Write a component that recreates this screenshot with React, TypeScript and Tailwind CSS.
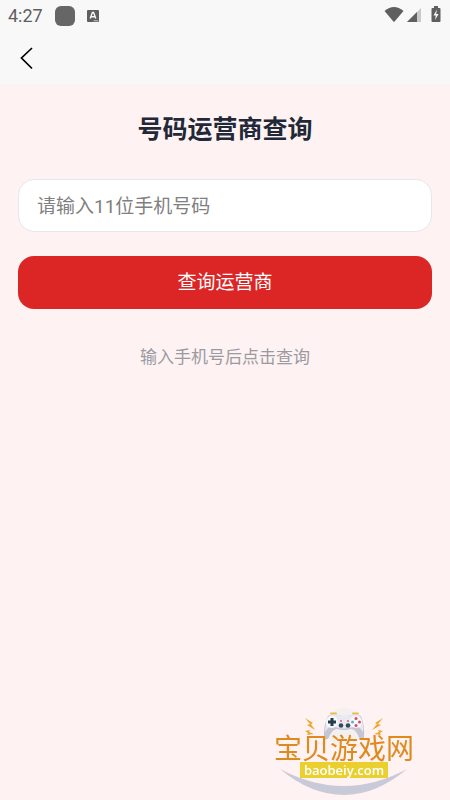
function StatusBar() {
  return (
    <div className="flex h-8 items-center justify-between pl-2 pr-2 text-[#5f5f5f]">
      <div className="flex items-center">
        <span className="font-['Roboto',sans-serif] text-lg leading-5">4:27</span>
        <span className="ml-3 h-5 w-5 rounded-md bg-[#666666]"></span>
        <svg className="ml-3 h-3 w-3" viewBox="0 0 12 12" aria-hidden="true">
          <rect width="12" height="12" rx="1" fill="#5f5f5f" />
          <path d="M3.2 8.5 L5.4 2.5 H6.6 L8.8 8.5 M4.2 6.8 H7.8" fill="none" stroke="#f8f8f8" strokeWidth="1.4" />
          <path d="M6.5 10.8 H11" stroke="#c8c8c8" strokeWidth="1" />
        </svg>
      </div>

      <div className="flex items-center pb-1">
        {/* wifi */}
        <svg className="h-4 w-5" viewBox="0 0 20 16" aria-hidden="true">
          <path d="M0.5 5 Q10 -3 19.5 5 L10.6 15.5 Q10 16 9.4 15.5 Z" fill="currentColor" />
        </svg>
        {/* signal */}
        <svg className="ml-0.5 h-4 w-4" viewBox="0 0 16 16" aria-hidden="true">
          <path d="M15 2 V16 H1 Z" fill="#c9c9c9" />
          <path d="M11 6 V16 H1 Z" fill="currentColor" />
        </svg>
        {/* battery */}
        <svg className="ml-2 h-4 w-3" viewBox="0 0 12 16" aria-hidden="true">
          <path d="M4 0 H8 V2 H9.5 Q10.5 2 10.5 3 V15 Q10.5 16 9.5 16 H2.5 Q1.5 16 1.5 15 V3 Q1.5 2 2.5 2 H4 Z" fill="currentColor" />
          <path d="M7 3.5 L3.5 9.5 H5.8 L5 14 L8.6 8 H6.2 Z" fill="#f8f8f8" />
        </svg>
      </div>
    </div>
  );
}

function Watermark() {
  return (
    <div className="pointer-events-none fixed bottom-0 right-7 h-24 w-40">
      <svg className="absolute inset-0 h-24 w-40" viewBox="0 0 160 96" aria-hidden="true">
        <circle cx="82" cy="23" r="19" fill="#f3f0f0" />
        <path d="M18 65 Q82 99 145 65 Q114 91 82 91 Q49 91 18 65 Z" fill="#c9cad8" />

        {/* gamepad */}
        <path d="M69 9.5 H74 M91 9.5 H96" stroke="#e8bd4e" strokeWidth="2" strokeLinecap="round" />
        <path
          d="M66 12 Q69 10 74 11 Q78 12 82 12 Q87 12 91 11 Q96 10 99 12 Q103 22 102 35 Q98 37 96 31 Q93 25 89 25 Q82 27 75 25 Q71 25 68 31 Q66 37 62 35 Q61 22 66 12 Z"
          fill="#c5c5d4"
        />
        <path
          d="M67 12 Q70 10 74 11 Q78 12 82 12 Q87 12 91 11 Q95 10 98 12 Q102 20 101 28 Q97 21 91 23 Q82 26 73 23 Q67 21 63 28 Q63 20 67 12 Z"
          fill="#e9e9f1"
        />
        <circle cx="70" cy="18" r="6" fill="#f8f8fb" />
        <circle cx="94" cy="18" r="6" fill="#f8f8fb" />
        <path d="M70 14 V22 M66 18 H74" stroke="#253d49" strokeWidth="3" />
        <circle cx="94" cy="14.5" r="1.5" fill="#d84a60" />
        <circle cx="94" cy="21.5" r="1.5" fill="#d84a60" />
        <circle cx="90.5" cy="18" r="1.5" fill="#55b7cc" />
        <circle cx="97.5" cy="18" r="1.5" fill="#d84a60" />
        <circle cx="79" cy="21.5" r="2.3" fill="#334b58" />
        <circle cx="86" cy="21.5" r="2.3" fill="#334b58" />
        <path d="M78 17 H80 M85 17 H87" stroke="#dc5974" strokeWidth="1.6" />

        {/* sparks */}
        <g fill="#f0a62f">
          <path d="M43 14 L51 19 L49 20 L53 26 L45 21 L48 20 Z" />
          <path d="M43 27 L48 26 L47 28 L52 30 L45 31 L46 29 Z" />
          <path d="M121 14 L113 19 L115 20 L110 26 L119 21 L116 20 Z" />
          <path d="M121 27 L116 26 L117 28 L112 30 L119 31 L118 29 Z" />
        </g>
      </svg>
      <div className="relative flex flex-col items-center pl-1 pt-7 leading-none">
        <span className="whitespace-nowrap font-['Noto_Sans_CJK_SC',sans-serif] text-[28px] leading-[30px] text-[#e08a1e]">
          宝贝游戏网
        </span>
        <span className="bg-[#ead02f] px-1 font-['Open_Sans',sans-serif] text-[13px] font-semibold leading-4 text-white">
          baobeiy.com
        </span>
      </div>
    </div>
  );
}

export default function App() {
  return (
    <div className="flex min-h-screen flex-col bg-[#fef2f2] font-['Roboto','Noto_Sans_CJK_SC',sans-serif]">
      <header className="h-[84px] bg-[#f8f8f8]">
        <StatusBar />
        <button type="button" aria-label="返回" className="ml-4 mt-3 block text-black">
          <svg className="h-7 w-5" viewBox="0 0 20 28" fill="none" stroke="currentColor" strokeWidth="1.7" aria-hidden="true">
            <path d="M16 4 L5.5 14 L16 24.5" />
          </svg>
        </button>
      </header>

      <main className="flex flex-col px-[18px] pt-7">
        <h1 className="text-center text-[25px] font-bold leading-9 text-[#1f2937]">号码运营商查询</h1>

        <form className="mt-[31px] flex flex-col gap-6" onSubmit={(e) => e.preventDefault()}>
          <input
            type="tel"
            maxLength={11}
            aria-label="手机号码"
            placeholder="请输入11位手机号码"
            className="h-[53px] w-full rounded-2xl border border-[#e5e7eb] bg-white px-[18px] pt-0.5 text-[19px] text-[#1f2937] outline-none placeholder:text-[#808080]"
          />
          <button type="submit" className="h-[53px] w-full rounded-2xl bg-[#dc2626] pt-0.5 text-[19px] text-white">
            查询运营商
          </button>
        </form>

        <p className="mt-9 text-center text-[17px] leading-6 text-[#9a9ba2]">输入手机号后点击查询</p>
      </main>

      <Watermark />
    </div>
  );
}
